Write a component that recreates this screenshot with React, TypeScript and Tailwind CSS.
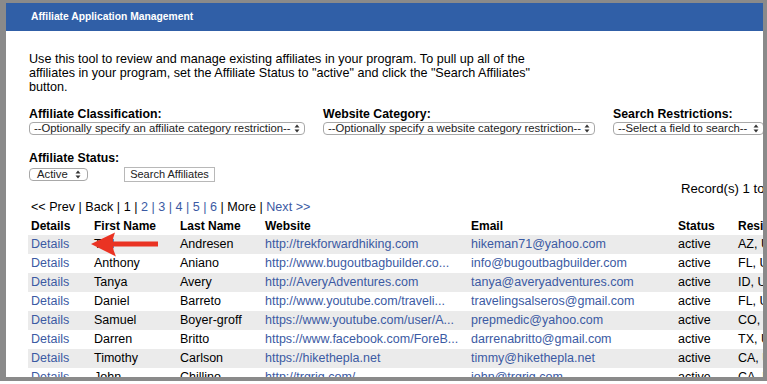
import React from "react";

interface Affiliate {
  first: string;
  last: string;
  website: string;
  email: string;
  status: string;
  region: string;
}

const rows: Affiliate[] = [
  { first: "Ted", last: "Andresen", website: "http://trekforwardhiking.com", email: "hikeman71@yahoo.com", status: "active", region: "AZ, USA" },
  { first: "Anthony", last: "Aniano", website: "http://www.bugoutbagbuilder.co...", email: "info@bugoutbagbuilder.com", status: "active", region: "FL, USA" },
  { first: "Tanya", last: "Avery", website: "http://AveryAdventures.com", email: "tanya@averyadventures.com", status: "active", region: "ID, USA" },
  { first: "Daniel", last: "Barreto", website: "http://www.youtube.com/traveli...", email: "travelingsalseros@gmail.com", status: "active", region: "FL, USA" },
  { first: "Samuel", last: "Boyer-groff", website: "https://www.youtube.com/user/A...", email: "prepmedic@yahoo.com", status: "active", region: "CO, USA" },
  { first: "Darren", last: "Britto", website: "https://www.facebook.com/ForeB...", email: "darrenabritto@gmail.com", status: "active", region: "TX, USA" },
  { first: "Timothy", last: "Carlson", website: "https://hikethepla.net", email: "timmy@hikethepla.net", status: "active", region: "CA, USA" },
  { first: "John", last: "Chillino", website: "http://trgrig.com/", email: "john@trgrig.com", status: "active", region: "CA, USA" },
];

const cols = "grid grid-cols-[63px_86px_85px_206px_207px_60px_120px] items-center";

const Arrows = () => (
  <svg width="6" height="9" viewBox="0 0 6 9" className="shrink-0">
    <path d="M3 0.5 L5.5 3.5 H0.5 Z" fill="#333" />
    <path d="M3 8.5 L5.5 5.5 H0.5 Z" fill="#333" />
  </svg>
);

const FakeSelect: React.FC<{ text: string; className: string }> = ({ text, className }) => (
  <div
    className={`h-[13px] rounded-[4px] border border-[#a8a8a8] bg-white flex items-center justify-between pl-[4px] pr-[4px] text-[11.3px] leading-none text-[#222] whitespace-nowrap overflow-hidden ${className}`}
  >
    <span>{text}</span>
    <Arrows />
  </div>
);

const Field: React.FC<{ label: string; text: string; width: string }> = ({ label, text, width }) => (
  <div className="flex flex-col gap-[1px]">
    <p className="text-[12.3px] leading-[14px] font-bold text-black">{label}</p>
    <FakeSelect text={text} className={width} />
  </div>
);

export default function App() {
  return (
    <div className="w-[767px] h-[384px] bg-white overflow-hidden font-['Liberation_Sans',Arial,sans-serif]">
      <div className="h-[381px] border-[#8a8a8a] border-t-[3px] border-l-[6px] border-r-[4px] border-b-[4px] flex flex-col overflow-hidden">
        {/* Title bar */}
        <div className="h-[28px] shrink-0 bg-[#305fa7] flex items-center pl-[25px] text-white font-bold text-[10.3px]">
          Affiliate Application Management
        </div>

        {/* Body */}
        <div className="flex-1 overflow-hidden pl-[23px] pt-[21px]">
          <div className="w-[900px]">
            <p className="w-[560px] text-[12.6px] leading-[14px] text-black">
              Use this tool to review and manage existing affiliates in your program. To pull up all of the
              <br />
              affiliates in your program, set the Affiliate Status to "active" and click the "Search Affiliates"
              <br />
              button.
            </p>

            <div className="flex gap-[18px] mt-[13px]">
              <Field label="Affiliate Classification:" text="--Optionally specify an affiliate category restriction--" width="w-[276px]" />
              <Field label="Website Category:" text="--Optionally specify a website category restriction--" width="w-[272px]" />
              <Field label="Search Restrictions:" text="--Select a field to search--" width="w-[151px]" />
            </div>

            <p className="mt-[16px] text-[12.3px] leading-[14px] font-bold text-black">Affiliate Status:</p>
            <div className="flex items-center gap-[36px] mt-[2px]">
              <FakeSelect text="Active" className="w-[59px] pl-[7px] pr-[6px]" />
              <button className="h-[15px] w-[91px] border border-[#b8b8b8] bg-white text-[11px] leading-none text-[#222]">
                Search Affiliates
              </button>
            </div>

            <p className="pl-[652px] text-[13.2px] leading-[14px] text-black whitespace-nowrap">Record(s) 1 to 25 of 131</p>

            <p className="mt-[4px] pl-[2px] text-[12.6px] leading-[14px] text-black whitespace-nowrap">
              {"<< Prev | Back | 1 | "}
              <span className="text-[#3b5aa3]">2 | 3 | 4 | 5 | 6</span>
              {" | More | "}
              <span className="text-[#3b5aa3]">{"Next >>"}</span>
            </p>

            {/* Results table */}
            <div className="relative mt-[2px] -ml-px">
              <div className={`${cols} h-[19px] text-[12px] font-bold text-black`}>
                {["Details", "First Name", "Last Name", "Website", "Email", "Status", "Residence"].map((h) => (
                  <span key={h} className="px-[3px] whitespace-nowrap">{h}</span>
                ))}
              </div>
              {rows.map((r, i) => (
                <div
                  key={r.email}
                  className={`${cols} h-[19px] text-[12.5px] whitespace-nowrap ${i % 2 === 0 ? "bg-[#ebebeb]" : "bg-white"}`}
                >
                  <span className="px-[3px] text-[#3b5aa3]">Details</span>
                  <span className="px-[3px] text-black">{r.first}</span>
                  <span className="px-[3px] text-black">{r.last}</span>
                  <span className="px-[3px] text-[#3b5aa3] overflow-hidden">{r.website}</span>
                  <span className="px-[3px] text-[#3b5aa3]">{r.email}</span>
                  <span className="px-[3px] text-black">{r.status}</span>
                  <span className="px-[3px] text-black">{r.region}</span>
                </div>
              ))}

              {/* annotation arrow */}
              <svg
                className="absolute left-[62px] top-[15px]"
                width="70"
                height="28"
                viewBox="0 0 70 28"
              >
                <path d="M1 13 L25 1.5 Q20 13 26 25.5 Z" fill="#ea3323" />
                <rect x="21" y="10.5" width="47" height="5" fill="#ea3323" />
              </svg>
            </div>
          </div>
        </div>
      </div>
    </div>
  );
}
